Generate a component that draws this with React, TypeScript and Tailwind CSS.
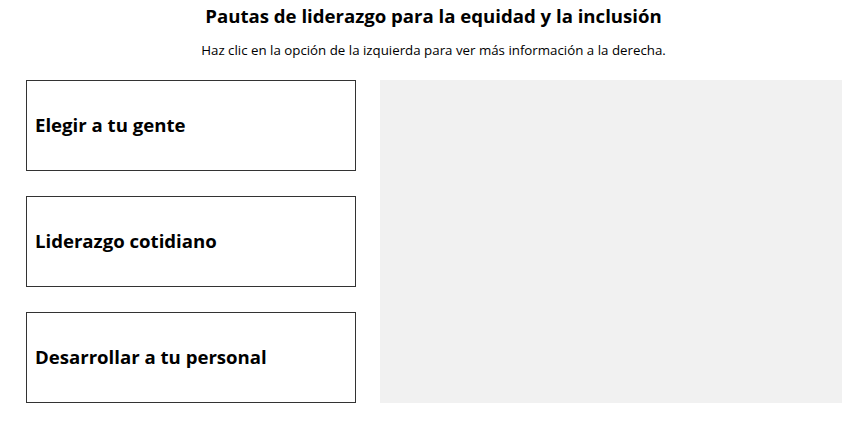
const options = ["Elegir a tu gente", "Liderazgo cotidiano", "Desarrollar a tu personal"]

export default function App() {
  return (
    <div className="min-h-[425px] bg-white font-['Open_Sans',sans-serif] text-black">
      <h1 className="pt-[2px] text-center text-[18.6px] font-bold leading-[28px]">
        Pautas de liderazgo para la equidad y la inclusión
      </h1>
      <p className="mt-[11px] text-center text-[13.3px] leading-[18px]">
        Haz clic en la opción de la izquierda para ver más información a la derecha.
      </p>

      <div className="mt-[21px] flex gap-[24px] pl-[26px] pr-[25px]">
        <div className="flex w-[330px] flex-col gap-[25px]">
          {options.map((label) => (
            <button
              key={label}
              type="button"
              className="flex h-[91px] items-center border border-[#333] px-[8px] pb-[1px] text-left text-[18.6px] font-bold"
            >
              {label}
            </button>
          ))}
        </div>
        <div className="h-[323px] flex-1 bg-[#f1f1f1]" />
      </div>
    </div>
  )
}
